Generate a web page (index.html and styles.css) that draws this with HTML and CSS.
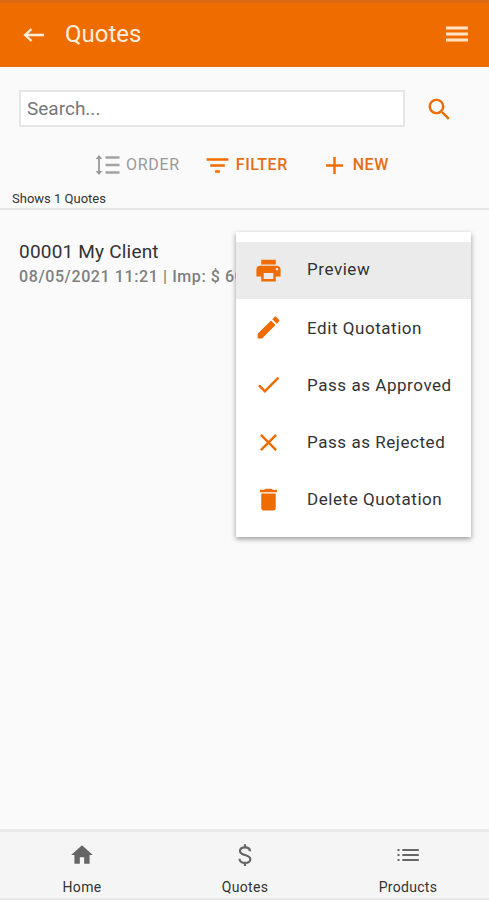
FILE: index.html
```html
<!DOCTYPE html>
<html lang="en">
<head>
    <meta charset="UTF-8">
    <meta name="viewport" content="width=device-width, initial-scale=1.0">
    <title>Quotes</title>
    <link rel="stylesheet" href="styles.css">
</head>
<body>
    <header class="app-bar">
        <svg class="back-icon" viewBox="0 0 22 16"><path d="M21 8H2M8.500 2L2.200 8l6.300 6"/></svg>
        <h1>Quotes</h1>
        <svg class="menu-icon" viewBox="0 0 22 16"><path d="M0 2h22M0 8h22M0 14h22"/></svg>
    </header>

    <main>
        <div class="search">
            <input type="text" class="search-input" placeholder="Search...">
            <svg class="icon search-icon" viewBox="0 0 24 24"><path d="M15.500 14h-.79l-.28-.27C15.410 12.590 16 11.110 16 9.500 16 5.910 13.090 3 9.500 3S3 5.910 3 9.500 5.910 16 9.500 16c1.610 0 3.090-.59 4.230-1.570l.27.28v.79l5 4.990L20.490 19l-4.990-5zm-6 0C7.010 14 5 11.990 5 9.500S7.010 5 9.500 5 14 7.010 14 9.500 11.990 14 9.500 14z"/></svg>
        </div>

        <div class="toolbar">
            <a class="tool order">
                <svg class="order-icon" viewBox="0 0 25 22"><path class="arrows" d="M4 4v14"/><path class="heads" d="M4 1l3.300 4H.7zM4 21l3.300-4H.7z"/><path class="lines" d="M10.500 3.500h14M10.500 11h14M10.500 18.500h14"/></svg>
                <span>ORDER</span>
            </a>
            <a class="tool filter">
                <svg class="icon" viewBox="0 0 24 24"><path d="M10 18h4v-2h-4v2zM3 6v2h18V6H3zm3 7h12v-2H6v2z"/></svg>
                <span>FILTER</span>
            </a>
            <a class="tool new">
                <svg class="icon" viewBox="0 0 24 24"><path d="M19 13h-6v6h-2v-6H5v-2h6V5h2v6h6v2z"/></svg>
                <span>NEW</span>
            </a>
        </div>

        <p class="count">Shows 1 Quotes</p>

        <div class="quote">
            <div class="quote-title">00001 My Client</div>
            <div class="quote-info">08/05/2021 11:21 | Imp: $ 60</div>

            <div class="menu">
                <a class="menu-item active">
                    <svg class="icon" viewBox="0 0 24 24"><path d="M19 8H5c-1.660 0-3 1.340-3 3v6h4v4h12v-4h4v-6c0-1.660-1.340-3-3-3zm-3 11H8v-5h8v5zm3-7c-.55 0-1-.45-1-1s.45-1 1-1 1 .45 1 1-.45 1-1 1zm-1-9H6v4h12V3z"/></svg>
                    <span>Preview</span>
                </a>
                <a class="menu-item">
                    <svg class="icon" viewBox="0 0 24 24"><path d="M3 17.250V21h3.750L17.810 9.940l-3.750-3.750L3 17.250zM20.710 7.040c.39-.39.39-1.020 0-1.410l-2.340-2.340c-.39-.39-1.020-.39-1.410 0l-1.830 1.830 3.750 3.750 1.830-1.830z"/></svg>
                    <span>Edit Quotation</span>
                </a>
                <a class="menu-item">
                    <svg class="icon" viewBox="0 0 24 24"><path d="M9 16.170L4.830 12l-1.420 1.410L9 19 21 7l-1.410-1.410z"/></svg>
                    <span>Pass as Approved</span>
                </a>
                <a class="menu-item">
                    <svg class="icon" viewBox="0 0 24 24"><path d="M19 6.410L17.590 5 12 10.590 6.410 5 5 6.410 10.590 12 5 17.590 6.410 19 12 13.410 17.590 19 19 17.590 13.410 12z"/></svg>
                    <span>Pass as Rejected</span>
                </a>
                <a class="menu-item">
                    <svg class="icon" viewBox="0 0 24 24"><path d="M6 19c0 1.100.9 2 2 2h8c1.100 0 2-.9 2-2V7H6v12zM19 4h-3.500l-1-1h-5l-1 1H5v2h14V4z"/></svg>
                    <span>Delete Quotation</span>
                </a>
            </div>
        </div>
    </main>

    <nav class="bottom-nav">
        <a class="nav-item">
            <svg class="nav-icon" viewBox="0 0 24 24"><path d="M10 20v-6h4v6h5v-8h3L12 3 2 12h3v8z"/></svg>
            <span>Home</span>
        </a>
        <a class="nav-item">
            <svg class="nav-icon outline" viewBox="0 0 26 26"><path d="M18 9.300C18 6.800 16 5.300 13 5.300S8 6.800 8 9c0 2.300 2 3.200 5 4s5.300 1.800 5.300 4.200-2.300 3.700-5.300 3.700-5.500-1.500-5.500-4.200M13 2.300v3M13 21v3"/></svg>
            <span>Quotes</span>
        </a>
        <a class="nav-item">
            <svg class="nav-icon outline" viewBox="0 0 26 26"><path d="M2.500 8h2M7.300 8h16.500M2.500 13h2M7.300 13h16.500M2.500 18h2M7.300 18h16.500"/></svg>
            <span>Products</span>
        </a>
    </nav>
</body>
</html>
```

FILE: styles.css
```css
* {
    box-sizing: border-box;
}
body {
    display: flex;
    flex-direction: column;
    height: 900px;
    margin: 0;
    overflow: hidden;
    background: #fafafa;
    color: #333;
    font-family: Roboto, "Liberation Sans", sans-serif;
}
svg {
    display: block;
    flex: none;
}
.icon {
    width: 29px;
    height: 29px;
    fill: #ee6c00;
}

/* Header */
.app-bar {
    display: flex;
    align-items: center;
    height: 67px;
    padding: 0 21px 3px 23px;
    border-top: 3px solid #dc6a10;
    background: #ef6c00;
    color: #ffeedd;
}
.app-bar h1 {
    flex: 1;
    margin: 0 0 0 20px;
    font-size: 24px;
    font-weight: 400;
}
.back-icon {
    width: 22px;
    height: 16px;
    margin-top: 2px;
    fill: none;
    stroke: #ffeedd;
    stroke-width: 2.4;
}
.menu-icon {
    width: 22px;
    height: 16px;
    stroke: #ffe3c4;
    stroke-width: 2.8;
}

/* Search */
main {
    flex: 1;
}
.search {
    display: flex;
    align-items: center;
    padding: 23px 0 0 19px;
}
.search-input {
    width: 386px;
    height: 37px;
    padding: 0 6px;
    border: 2px solid #e6e6e6;
    background: #fff;
    font-family: inherit;
    font-size: 19px;
}
.search-input::placeholder {
    color: #777;
}
.search-icon {
    margin: 2px 0 0 20px;
}

/* Toolbar */
.toolbar {
    display: flex;
    align-items: center;
    height: 62px;
    padding: 14px 0 0 95px;
    font-size: 16px;
    font-weight: 500;
    letter-spacing: 0.5px;
}
.tool {
    display: flex;
    align-items: center;
    color: #e66f14;
}
.tool span {
    margin: -2px 0 0 4px;
}
.tool.order {
    color: #999;
    font-weight: 400;
    letter-spacing: 0.7px;
}
.order-icon {
    width: 25px;
    height: 22px;
    margin-right: 2px;
}
.arrows {
    stroke: #999;
    stroke-width: 1.8;
}
.heads {
    fill: #999;
}
.lines {
    stroke: #a3a3a3;
    stroke-width: 2.4;
}
.filter {
    margin-left: 23px;
}
.new {
    margin-left: 32px;
}
.count {
    height: 21px;
    margin: 0;
    padding-left: 12px;
    border-bottom: 2px solid #e6e6e6;
    font-size: 13px;
    line-height: 19px;
}

/* Quote row */
.quote {
    position: relative;
    padding: 30px 19px;
}
.quote-title {
    font-size: 19px;
    letter-spacing: 0.2px;
    line-height: 24px;
}
.quote-info {
    color: #808080;
    font-size: 16px;
    font-weight: 500;
    letter-spacing: 0.6px;
    line-height: 26px;
    white-space: nowrap;
}
.menu {
    position: absolute;
    top: 22px;
    left: 236px;
    width: 235px;
    height: 305px;
    padding-top: 10px;
    background: #fff;
    box-shadow: 0 2px 5px rgba(0, 0, 0, 0.4);
}
.menu-item {
    display: flex;
    align-items: center;
    height: 57.2px;
    padding-left: 18px;
    font-size: 17px;
    letter-spacing: 0.55px;
}
.menu-item span {
    margin-left: 24px;
}
.active {
    background: #ebebeb;
}
.active span {
    margin-top: -4px;
}

/* Bottom navigation */
.bottom-nav {
    display: flex;
    height: 71px;
    border-top: 3px solid #e9e9e9;
    border-bottom: 2px solid #e9e9e9;
    background: #f5f5f5;
}
.nav-item {
    display: flex;
    flex: 1;
    flex-direction: column;
    align-items: center;
    padding: 10px 0 0 1px;
    font-size: 14px;
    letter-spacing: 0.3px;
}
.nav-icon {
    width: 26px;
    height: 26px;
    margin-bottom: 11px;
    fill: #666;
}
.outline {
    fill: none;
    stroke: #666;
    stroke-width: 2.2;
}
```
